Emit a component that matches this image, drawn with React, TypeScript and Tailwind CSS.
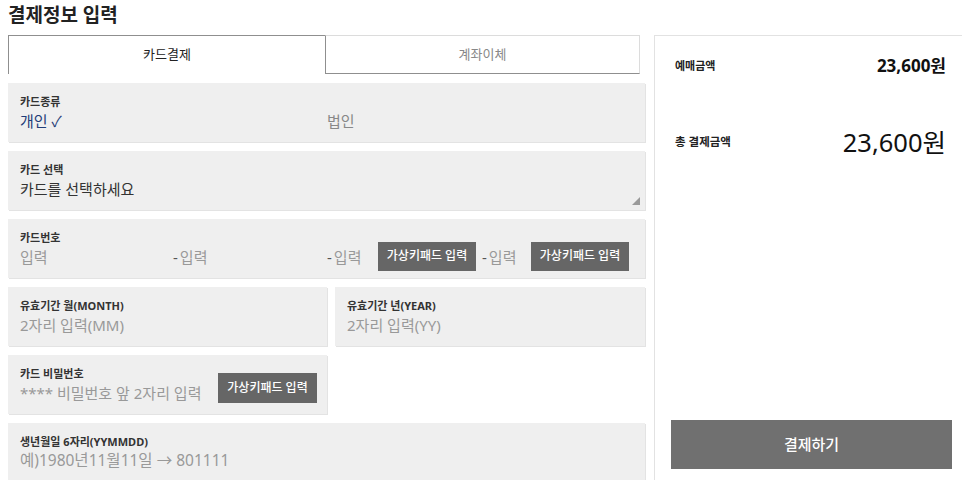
import React from "react";

const font = { fontFamily: '"Noto Sans", "Noto Sans CJK KR", sans-serif' };

function Label({ children }: { children: React.ReactNode }) {
  return <div className="h-[14px] text-[11px] leading-[14px] font-bold text-[#333]">{children}</div>;
}

function Panel({ className = "", children }: { className?: string; children: React.ReactNode }) {
  return (
    <div className={`relative h-[59px] bg-[#efefef] shadow-[1px_1px_0_#e3e3e3] pl-[12px] pt-[12px] ${className}`}>
      {children}
    </div>
  );
}

function KeypadBtn({ className = "" }: { className?: string }) {
  return (
    <div className={`flex h-[29px] w-[98px] shrink-0 items-center justify-center bg-[#666] text-[12px] font-medium text-white ${className}`}>
      가상키패드 입력
    </div>
  );
}

function Dash() {
  return <span className="mr-[2px] text-[#555]">-</span>;
}

export default function App() {
  return (
    <div style={font} className="w-[962px] h-[480px] overflow-hidden bg-white text-[#222]">
      <div className="h-[35px] pl-[8px] pt-[3px] text-[19px] font-bold leading-[24px] text-[#222]">결제정보 입력</div>
      <div className="flex">
        <div className="ml-[8px] w-[637px]">
          <div className="flex h-[39px] w-[632px]">
            <div className="flex w-[317px] items-center justify-center border-l border-t border-[#8f8f8f] text-[13px] text-[#222]">
              카드결제
            </div>
            <div className="flex flex-1 items-center justify-center border-b border-l border-r border-t border-[#8f8f8f] border-t-[#dcdcdc] border-r-[#dcdcdc] text-[13px] text-[#888]">
              계좌이체
            </div>
          </div>

          <div className="mt-[9px] flex flex-col gap-[9px]">
            <Panel>
              <Label>카드종류</Label>
              <div className="mt-[2px] flex h-[20px] items-center text-[15px]">
                <span className="w-[307px] text-[#1f3d78]">개인 ✓</span>
                <span className="text-[#888]">법인</span>
              </div>
            </Panel>

            <Panel>
              <Label>카드 선택</Label>
              <div className="mt-[2px] flex h-[20px] items-center text-[15px] text-[#333]">카드를 선택하세요</div>
              <svg className="absolute bottom-[5px] right-[5px]" width="8" height="8" viewBox="0 0 8 8">
                <polygon points="8,0 8,8 0,8" fill="#9a9a9a" />
              </svg>
            </Panel>

            <Panel>
              <Label>카드번호</Label>
              <div className="mt-[2px] flex h-[20px] items-center text-[15px] text-[#999]">
                <span className="w-[153px]">입력</span>
                <span className="w-[154px]"><Dash />입력</span>
                <span className="w-[51px]"><Dash />입력</span>
                <KeypadBtn className="mt-[-2px]" />
                <span className="ml-[6px] w-[49px]"><Dash />입력</span>
                <KeypadBtn className="mt-[-2px]" />
              </div>
            </Panel>

            <div className="flex gap-[8px]">
              <Panel className="w-[319px]">
                <Label>유효기간 월(MONTH)</Label>
                <div className="mt-[2px] flex h-[20px] items-center text-[15px] text-[#999]">2자리 입력(MM)</div>
              </Panel>
              <Panel className="flex-1">
                <Label>유효기간 년(YEAR)</Label>
                <div className="mt-[2px] flex h-[20px] items-center text-[15px] text-[#999]">2자리 입력(YY)</div>
              </Panel>
            </div>

            <Panel className="w-[319px]">
              <Label>카드 비밀번호</Label>
              <div className="mt-[2px] flex h-[20px] items-center text-[15px] text-[#999]">
                <span className="w-[198px]">**** 비밀번호 앞 2자리 입력</span>
                <KeypadBtn className="mb-[10px] h-[30px] w-[99px]" />
              </div>
            </Panel>

            <Panel>
              <Label>생년월일 6자리(YYMMDD)</Label>
              <div className="mt-[2px] flex h-[20px] items-center text-[15.5px] text-[#999]">예)1980년11월11일 → 801111</div>
            </Panel>
          </div>
        </div>

        <div className="ml-[9px] h-[445px] flex-1 border-l border-t border-[#e2e2e2] pl-[16px] pr-[10px]">
          <div className="mt-[20px] flex h-[20px] items-center justify-between pl-[4px] pr-[6px]">
            <span className="text-[11px] font-bold text-[#222]">예매금액</span>
            <span className="text-[17px] font-bold text-[#111]">23,600원</span>
          </div>
          <div className="mt-[50px] flex h-[32px] items-center justify-between pl-[4px] pr-[6px]">
            <span className="text-[11.5px] font-bold text-[#222]">총 결제금액</span>
            <span className="text-[25.5px] text-[#111]">23,600원</span>
          </div>
          <div className="mt-[262px] flex h-[49px] items-center justify-center bg-[#707070] text-[15px] font-medium text-white">
            결제하기
          </div>
        </div>
      </div>
    </div>
  );
}
